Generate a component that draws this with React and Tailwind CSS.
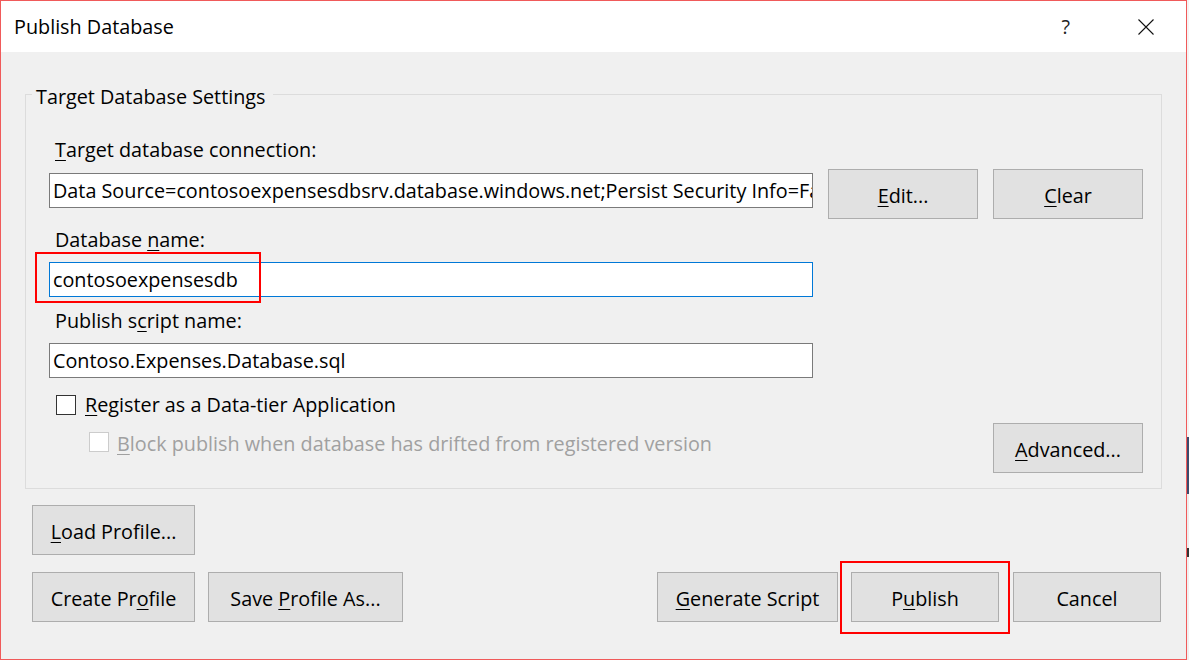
import React from "react";

function U({ children }) {
  return <span className="underline decoration-1 underline-offset-[3px]">{children}</span>;
}

function Btn({ className, children }) {
  return (
    <div
      className={
        "flex h-[50px] shrink-0 items-center justify-center border border-[#adadad] bg-[#e1e1e1] pt-[4px] text-black " +
        className
      }
    >
      <span className="leading-[28px]">{children}</span>
    </div>
  );
}

function TextBox({ value, focused, className }) {
  return (
    <div
      className={
        "flex h-[35px] w-[764px] shrink-0 items-center overflow-hidden whitespace-nowrap bg-white pl-[3px] text-black " +
        (focused ? "border border-[#0078d7] " : "border border-[#7a7a7a] ") +
        (className || "")
      }
    >
      {value}
    </div>
  );
}

export default function App() {
  return (
    <div className="flex h-[660px] w-[1189px] bg-white font-['Open_Sans',sans-serif] text-[19.8px] text-black">
      <div className="flex h-[660px] w-[1187px] shrink-0 flex-col border border-[#f05a5a] bg-[#f0f0f0]">
        {/* Title bar */}
        <div className="flex h-[51px] shrink-0 items-center bg-white pl-[13px] pr-[32px]">
          <span className="leading-[28px]">Publish Database</span>
          <span className="ml-auto leading-[28px] text-[#222]">?</span>
          <svg className="ml-[68px]" width="16" height="16" viewBox="0 0 16 16">
            <path d="M0.5 0.5 L15.5 15.5 M15.5 0.5 L0.5 15.5" stroke="#111" strokeWidth="1.1" fill="none" />
          </svg>
        </div>

        {/* Body */}
        <div className="flex flex-1 flex-col px-[24px] pt-[28px]">
          <fieldset className="border border-[#dcdcdc] px-[6px] pb-[15px]">
            <legend className="pl-[4px] pr-[7px] leading-[28px]">
              <span className="relative top-[3px]">Target Database Settings</span>
            </legend>
            <div className="flex flex-col pl-[17px] pr-[12px] pt-[28px]">
              <div className="pl-[6px] leading-[28px]">
                <U>T</U>arget database connection:
              </div>
              <div className="mt-[5px] flex items-start">
                <TextBox
                  className="mt-[4px]"
                  value="Data Source=contosoexpensesdbsrv.database.windows.net;Persist Security Info=False;User ID=admin"
                />
                <Btn className="ml-[15px] w-[150px]">
                  <U>E</U>dit...
                </Btn>
                <Btn className="ml-[15px] w-[150px]">
                  <U>C</U>lear
                </Btn>
              </div>

              <div className="mt-[7px] pl-[6px] leading-[28px]">
                Database <U>n</U>ame:
              </div>
              <div className="relative mt-[8px] w-[764px]">
                <TextBox value="contosoexpensesdb" focused />
                <div className="absolute left-[-14px] top-[-10px] h-[51px] w-[226px] border-2 border-[#ff0000]" />
              </div>

              <div className="mt-[10px] pl-[6px] leading-[28px]">
                Publish s<U>c</U>ript name:
              </div>
              <TextBox className="mt-[8px]" value="Contoso.Expenses.Database.sql" />

              <div className="mt-[13px] flex h-[28px] items-center pl-[7px]">
                <div className="h-[20px] w-[20px] border border-[#333333] bg-white" />
                <span className="ml-[9px] leading-[28px]">
                  <U>R</U>egister as a Data-tier Application
                </span>
              </div>

              <div className="mt-[4px] flex items-start">
                <div className="mt-[5px] flex h-[28px] items-center pl-[40px] text-[#a0a0a0]">
                  <div className="h-[20px] w-[20px] border border-[#cccccc] bg-white" />
                  <span className="relative top-[2px] ml-[8px] leading-[28px]">
                    <U>B</U>lock publish when database has drifted from registered version
                  </span>
                </div>
                <Btn className="ml-auto w-[150px]">
                  <U>A</U>dvanced...
                </Btn>
              </div>
            </div>
          </fieldset>

          <div className="mt-[16px] flex pl-[7px]">
            <Btn className="w-[163px]">
              <U>L</U>oad Profile...
            </Btn>
          </div>

          <div className="mt-[17px] flex items-start pl-[7px] pr-[1px]">
            <Btn className="w-[163px]">
              Create Pr<U>o</U>file
            </Btn>
            <Btn className="ml-[13px] w-[195px]">
              Save <U>P</U>rofile As...
            </Btn>
            <div className="ml-auto flex">
              <Btn className="w-[181px]">
                <U>G</U>enerate Script
              </Btn>
              <div className="relative ml-[13px]">
                <Btn className="w-[148px]">
                  P<U>u</U>blish
                </Btn>
                <div className="absolute bottom-[-12px] left-[-11px] right-[-11px] top-[-11px] border-2 border-[#ff0000]" />
              </div>
              <Btn className="ml-[14px] w-[148px]">Cancel</Btn>
            </div>
          </div>
        </div>
      </div>

      {/* Sliver of desktop beyond the window */}
      <div className="flex w-[2px] flex-col">
        <div className="h-[437px] bg-[#f4f4f4]" />
        <div className="h-[57px] bg-[#3b4a6c]" />
        <div className="h-[54px] bg-[#eeeeee]" />
        <div className="h-[9px] bg-[#333333]" />
        <div className="flex-1 bg-[#f0f0f0]" />
      </div>
    </div>
  );
}
